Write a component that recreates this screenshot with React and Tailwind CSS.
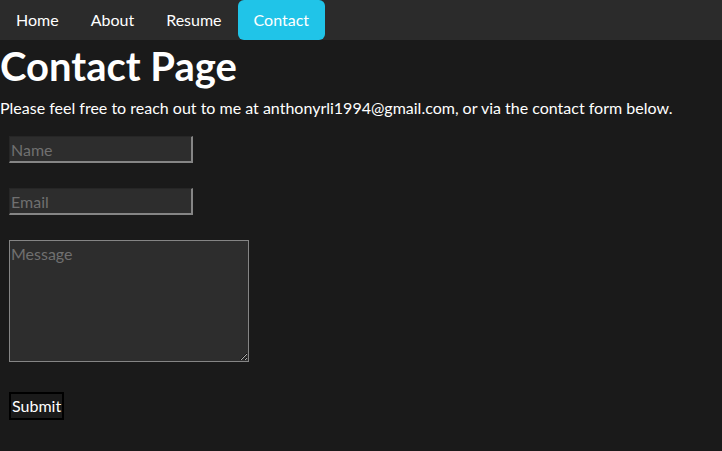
import { useState } from 'react'

const links = ['Home', 'About', 'Resume', 'Contact']

const App = () => {
  const [active] = useState('Contact')

  return (
    <div className="min-h-[451px] bg-[#1a1a1a] text-white font-['Lato',sans-serif]">
      {/* Nav */}
      <nav className="flex h-10 bg-[#2b2b2b]">
        {links.map(link => (
          <a
            key={link}
            href="#"
            className={`flex items-center px-4 text-base ${
              link === active ? 'bg-[#20c4e8] rounded-md' : ''
            }`}
          >
            {link}
          </a>
        ))}
      </nav>

      <h1 className="text-[40px] font-bold leading-[52px]">Contact Page</h1>
      <p className="text-base leading-[32px]">
        Please feel free to reach out to me at anthonyrli1994@gmail.com, or via the contact form below.
      </p>

      <form className="flex flex-col items-start pl-[9px] pt-[12px]">
        <input
          type="text"
          placeholder="Name"
          className="w-[184px] h-[27px] bg-[#2d2d2d] text-base pl-px placeholder:text-[#707070] border-t border-l border-b-2 border-r-2 border-t-[#262626] border-l-[#262626] border-b-[#858585] border-r-[#858585] outline-none"
        />
        <input
          type="email"
          placeholder="Email"
          className="mt-[25px] w-[184px] h-[27px] bg-[#2d2d2d] text-base pl-px placeholder:text-[#707070] border-t border-l border-b-2 border-r-2 border-t-[#262626] border-l-[#262626] border-b-[#858585] border-r-[#858585] outline-none"
        />
        <textarea
          placeholder="Message"
          className="mt-[25px] w-[240px] h-[122px] bg-[#2d2d2d] text-base pl-px placeholder:text-[#707070] border border-[#858585] outline-none leading-[26px]"
        />
        <button
          type="button"
          className="mt-[30px] h-[28px] px-[1px] bg-[#1a1a1a] border-2 border-black text-base text-white leading-none"
        >
          Submit
        </button>
      </form>
    </div>
  )
}

export default App
